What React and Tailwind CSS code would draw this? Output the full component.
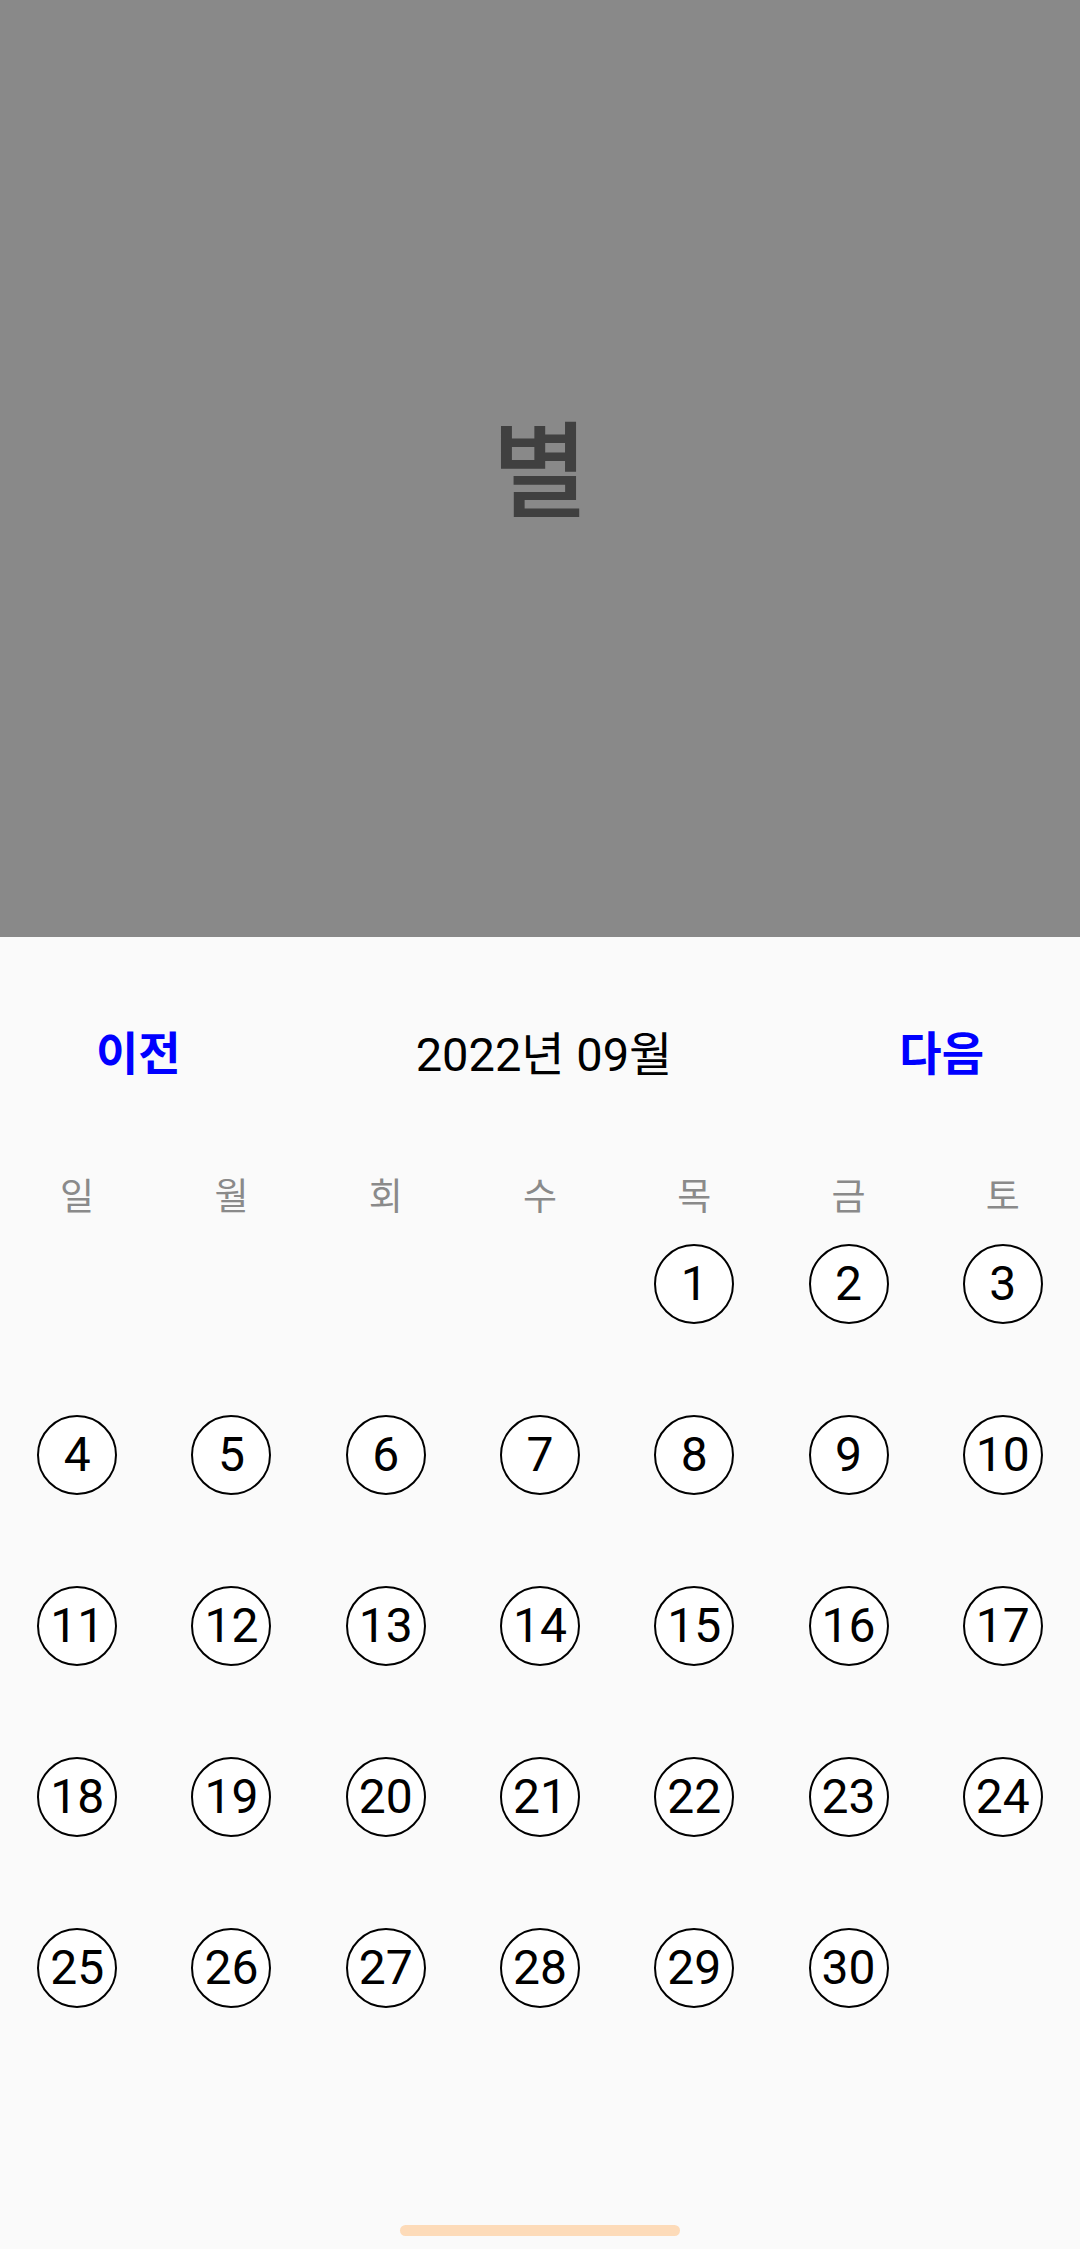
const days = ['일', '월', '회', '수', '목', '금', '토'];

function buildCells() {
  // September 2022 starts on Thursday
  const cells = [];
  for (let i = 0; i < 4; i++) cells.push(null);
  for (let d = 1; d <= 30; d++) cells.push(d);
  while (cells.length % 7 !== 0) cells.push(null);
  return cells;
}

export default function App() {
  const cells = buildCells();

  return (
    <div className="flex flex-col w-[1080px] h-[2249px] bg-[#fafafa] font-['Roboto','Noto_Sans_CJK_KR',sans-serif]">
      <div className="h-[937px] bg-[#898989] flex items-center justify-center">
        <span className="text-[105px] leading-none font-medium text-[#404040] pt-[10px]">별</span>
      </div>

      <div className="h-[234px] flex items-center justify-between px-[96px]">
        <button className="text-[46px] font-bold text-[#0000ff] leading-none">이전</button>
        <span className="text-[47px] text-black leading-none pl-[8px]">2022년 09월</span>
        <button className="text-[46px] font-bold text-[#0000ff] leading-none">다음</button>
      </div>

      <div className="grid grid-cols-7 h-[52px] items-center">
        {days.map((d) => (
          <div key={d} className="text-center text-[37px] leading-none text-[#8a8a8a]">
            {d}
          </div>
        ))}
      </div>

      <div className="grid grid-cols-7 auto-rows-[171px] pt-[21px]">
        {cells.map((d, i) => (
          <div key={i} className="flex justify-center items-start">
            {d && (
              <div className="w-[80px] h-[80px] rounded-full border-2 border-black bg-white flex items-center justify-center text-[48px] leading-none text-black">
                {d}
              </div>
            )}
          </div>
        ))}
      </div>

      <div className="flex-1 flex items-end justify-center pb-[13px]">
        <div className="w-[280px] h-[11px] rounded-full bg-[#fddbb9]" />
      </div>
    </div>
  );
}
